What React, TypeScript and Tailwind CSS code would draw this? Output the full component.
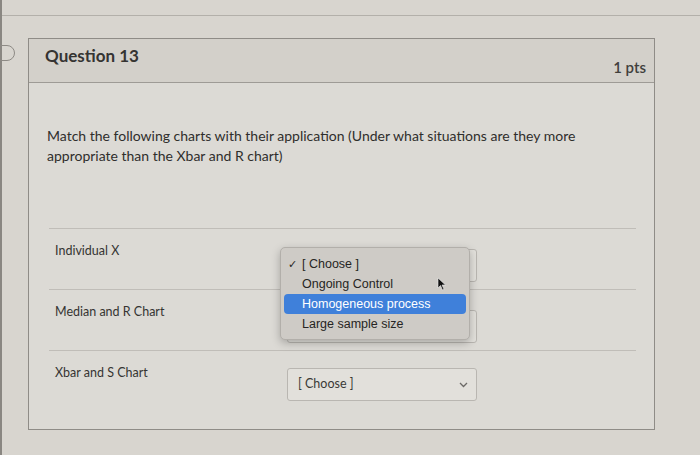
import React from "react";

const Chevron = () => (
  <svg width="9" height="6" viewBox="0 0 9 6" className="text-[#6b6966]">
    <path d="M1 1 L4.5 4.5 L8 1" fill="none" stroke="currentColor" strokeWidth="1.3" />
  </svg>
);

const Select = ({ label }: { label: string }) => (
  <div className="w-[190px] h-[33px] rounded-[3px] border border-[#b9b6b1] bg-[#e2e0db] flex items-center justify-between pl-[10px] pr-[8px] text-[12.5px] text-[#3a3936]">
    <span>{label}</span>
    <Chevron />
  </div>
);

const rows = ["Individual X", "Median and R Chart", "Xbar and S Chart"];

export default function App() {
  return (
    <div
      className="relative w-[700px] h-[455px] overflow-hidden bg-[#d8d5cf] text-[#2e2d2b]"
      style={{ fontFamily: "Lato, 'Open Sans', sans-serif" }}
    >
      {/* left dark edge */}
      <div className="absolute left-0 top-0 h-full w-[2px] bg-[#8a8782]" />
      {/* bookmark tab */}
      <div className="absolute left-[-6px] top-[45px] w-[21px] h-[16px] border border-[#8d8a85] rounded-r-[8px]" />

      <div className="h-[16px] border-b border-[#b3b0aa]" />

      <div className="ml-[28px] mt-[22px] w-[627px] h-[392px] border border-[#8f8c87] bg-[#dcdad5] flex flex-col">
        <div className="h-[44px] shrink-0 bg-[#d3d0ca] border-b border-[#9e9b96] flex items-center justify-between pl-[16px] pr-[8px]">
          <span className="text-[17px] font-bold text-[#353432] mb-[10px]">Question 13</span>
          <span className="text-[15px] font-semibold text-[#403f3c] mt-[14px]">1 pts</span>
        </div>
        <div className="pl-[18px] pr-[18px] pt-[43px]">
          <p className="text-[14px] leading-[20px] text-[#2f2e2c] w-[560px]">
            Match the following charts with their application (Under what situations are they more appropriate than the Xbar and R chart)
          </p>
        </div>
        <div className="mt-[62px] ml-[20px] mr-[18px] flex flex-col">
          {rows.map((r, i) => (
            <div key={r} className="h-[61px] border-t border-[#c0bdb8] flex items-start">
              <div className="w-[238px] pt-[13px] pl-[6px] text-[12.5px] text-[#353432]">{r}</div>
              <div className={i === 2 ? "mt-[17px]" : "mt-[20px]"}>
                <Select label={i === 2 ? "[ Choose ]" : ""} />
              </div>
            </div>
          ))}
        </div>
      </div>

      {/* open dropdown menu */}
      <div
        className="absolute left-[280px] top-[247px] w-[190px] h-[93px] rounded-[5px] bg-[#cecbc6] border border-[#b2afaa] shadow-[0_3px_8px_rgba(0,0,0,0.25)] py-[6px] px-[3px] text-[12.5px] text-[#262523]"
        style={{ fontFamily: "'Liberation Sans', Arial, sans-serif" }}
      >
        <div className="h-[20px] flex items-center">
          <span className="w-[15px] pl-[4px] text-[11px]">✓</span>
          <span className="pl-[3px]">[ Choose ]</span>
        </div>
        <div className="h-[20px] flex items-center pl-[18px]">Ongoing Control</div>
        <div className="h-[20px] flex items-center pl-[18px] rounded-[4px] bg-[#3f80da] text-white">Homogeneous process</div>
        <div className="h-[20px] flex items-center pl-[18px]">Large sample size</div>
      </div>

      {/* mouse cursor */}
      <svg className="absolute left-[437px] top-[277px]" width="10" height="14" viewBox="0 0 10 14">
        <path d="M1 1 L1 11 L3.5 8.5 L5.5 13 L7 12.3 L5 8 L8.5 8 Z" fill="#111" stroke="#eee" strokeWidth="0.6" />
      </svg>
    </div>
  );
}
